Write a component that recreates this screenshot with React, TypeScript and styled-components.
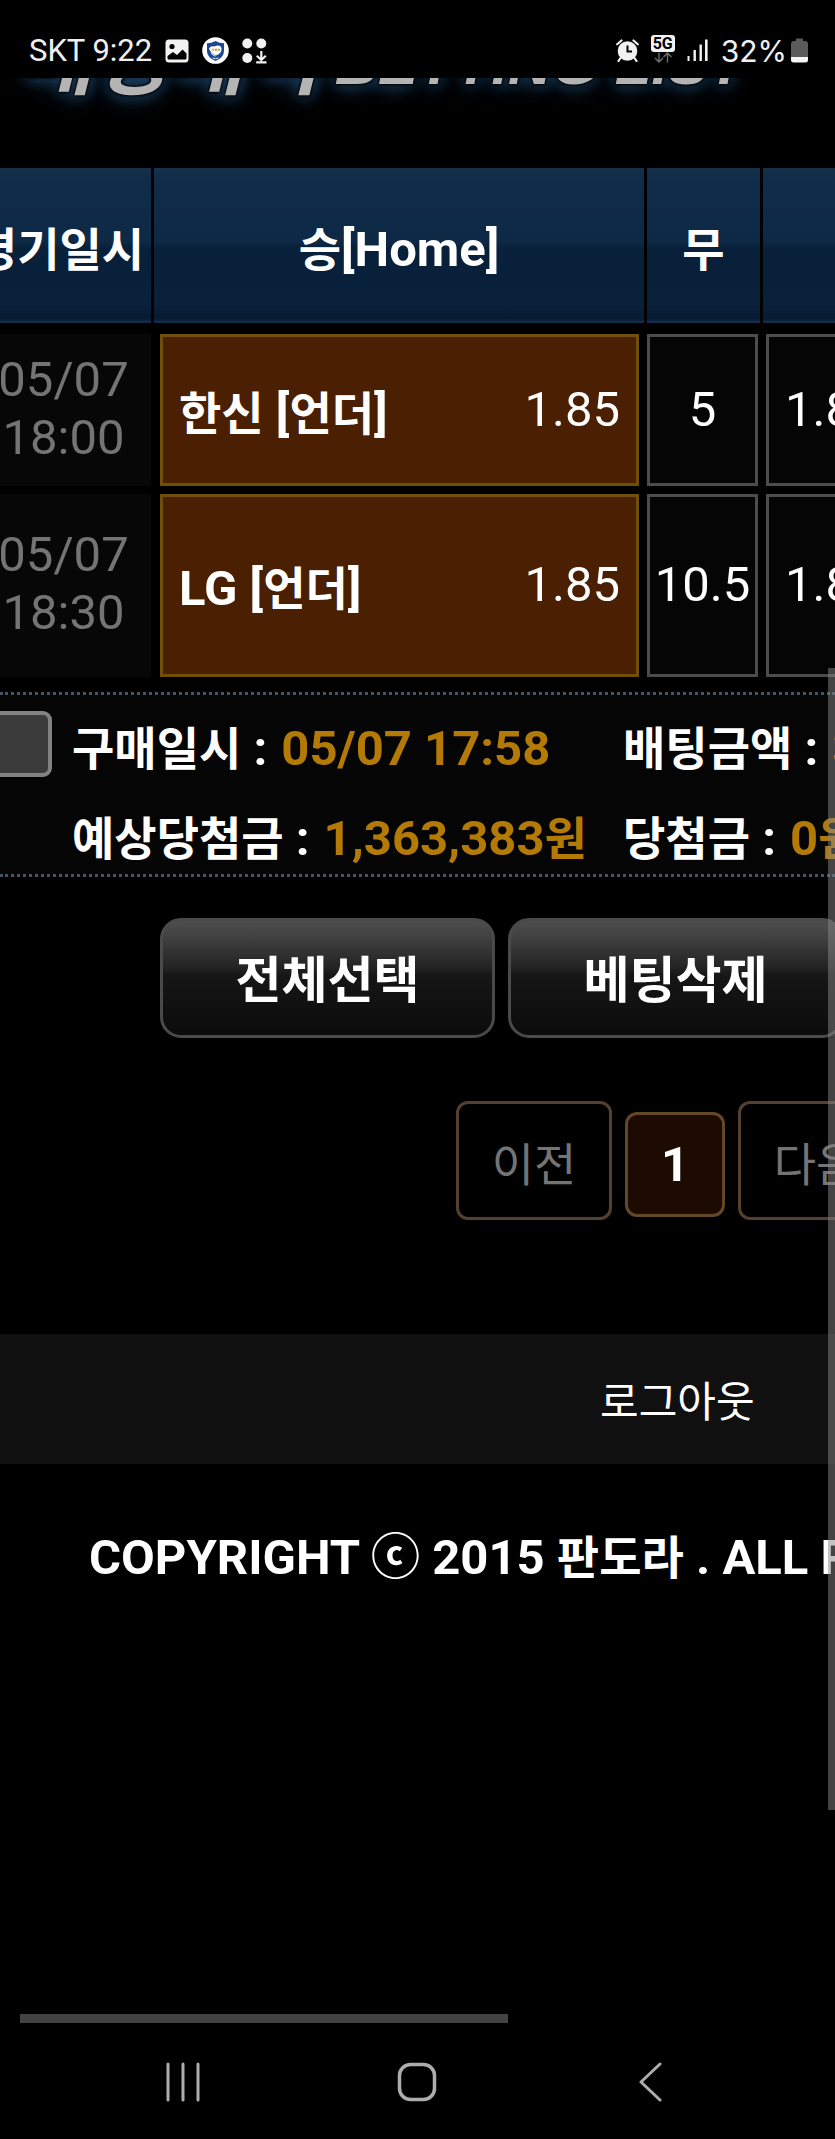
import React from "react";
import styled, { createGlobalStyle, css } from "styled-components";

const GlobalStyle = createGlobalStyle`
  * { box-sizing: border-box; }
  html, body { margin: 0; background: #000; }
  body {
    color: #fff;
    font-family: Roboto, "Noto Sans CJK KR", sans-serif;
    font-size: 49px;
    line-height: 58px;
    overflow-x: hidden;
  }
  a { color: inherit; text-decoration: none; }
`;

const Screen = styled.div`
  min-height: 100vh;
  display: flex;
  flex-direction: column;
  background: #000;
`;

const StatusBar = styled.header`
  height: 78px;
  padding: 23px 27px 0 29px;
  display: flex;
  justify-content: space-between;
  align-items: flex-start;
  color: #f0f0f0;
  font-size: 31px;
  line-height: 36px;
`;

const StatusGroup = styled.div<{ $gap: number }>`
  height: 55px;
  display: flex;
  align-items: center;
  gap: ${(p) => p.$gap}px;
  white-space: nowrap;
  svg { display: block; }
`;

const StatusPair = styled.span`
  display: flex;
  align-items: center;
  gap: 4px;
`;

const Percent = styled.span`
  font-family: Inter, sans-serif;
  font-size: 30px;
`;

const Content = styled.main`
  position: relative;
  flex: 1;
  overflow: hidden;
  padding-bottom: 120px;
`;

const Banner = styled.div`
  height: 90px;
  overflow: hidden;
`;

const Title = styled.h1`
  margin: -62px 0 0;
  padding-left: 18px;
  display: flex;
  align-items: flex-end;
  gap: 15px;
  white-space: nowrap;
  font-style: italic;
  font-weight: 700;
  font-size: 60px;
  line-height: 80px;
  font-family: "Liberation Sans", "Noto Sans CJK KR", sans-serif;
  color: #b4b4b4;
  text-shadow: 0 0 2px #000, 0 0 3px #000, 0 0 5px #000, 0 0 14px #24527f, 0 2px 22px #1d4368;
`;

const TitleKo = styled.span`
  font-size: 82px;
  line-height: 88px;
`;

const BetTable = styled.table`
  width: 1292px;
  margin-left: -36px;
  table-layout: fixed;
  border-collapse: separate;
  border-spacing: 0;
`;

const HeadCell = styled.th`
  height: 155px;
  padding: 9px 0 0;
  border-right: 3px solid #000;
  background: linear-gradient(#15304a 0, #0f2c49 8%, #0d2945 48%, #08203a 52%, #0a203b 88%, #071a33 97%, #16304c 100%);
  font-weight: 700;
  white-space: nowrap;
  &:first-child { padding-left: 4px; }
`;

const Ko = styled.span`
  font-size: 46px;
`;

const DateCell = styled.td<{ $first?: boolean }>`
  padding: ${(p) => (p.$first ? 11 : 8)}px 3px 0 0;
`;

const DateBox = styled.div<{ $tall?: boolean }>`
  height: ${(p) => (p.$tall ? 183 : 152)}px;
  padding: 0 0 3px 12px;
  display: flex;
  flex-direction: column;
  justify-content: center;
  align-items: center;
  background: #070707;
  color: #747474;
`;

const BetCell = styled.td<{ $first?: boolean; $left: number; $right: number }>`
  padding: ${(p) => (p.$first ? 11 : 8)}px ${(p) => p.$right}px 0 ${(p) => p.$left}px;
`;

const BetBox = styled.div<{ $tall?: boolean; $picked?: boolean; $center?: boolean }>`
  height: ${(p) => (p.$tall ? 183 : 152)}px;
  padding: 0 ${(p) => (p.$center ? 0 : 16)}px ${(p) => (p.$tall ? 2 : 0)}px;
  display: flex;
  align-items: center;
  justify-content: ${(p) => (p.$center ? "center" : "space-between")};
  border: 3px solid #4c4c4c;
  background: #050505;
  white-space: nowrap;
  ${(p) =>
    p.$picked &&
    css`
      border-color: #705006;
      background: #4a1f02;
    `}
`;

const Team = styled.strong`
  padding-top: 8px;
  font-weight: 700;
`;

const Summary = styled.section`
  margin-top: 15px;
  height: 185px;
  display: flex;
  border-top: 3px dotted #455465;
  border-bottom: 3px dotted #455465;
  background: #050505;
  font-weight: 700;
  white-space: nowrap;
`;

const Pick = styled.input`
  appearance: none;
  flex: none;
  width: 66px;
  height: 66px;
  margin: 16px 20px 0 -14px;
  border: 4px solid #828282;
  border-radius: 9px;
  background: #3b3b3b;
`;

const Facts = styled.dl`
  margin: 0;
  padding-top: 9px;
  display: grid;
  grid-template-columns: 551px 620px;
  grid-auto-rows: 90px;
`;

const Fact = styled.div`
  display: flex;
  align-items: center;
  gap: 14px;
  height: 90px;
`;

const Term = styled.dt``;

const Value = styled.dd`
  margin: 0;
  color: #b47a06;
`;

const Actions = styled.div`
  margin: 41px 0 0 160px;
  display: flex;
  gap: 13px;
`;

const ActionButton = styled.button`
  flex: none;
  width: 335px;
  height: 120px;
  padding: 0 0 4px;
  border: 3px solid #4a4a4a;
  border-radius: 21px;
  background: linear-gradient(#505050 0, #424242 15%, #222 42%, #161616 48%, #0b0b0b 100%) border-box;
  color: #fff;
  font: 700 50px/58px "Noto Sans CJK KR", sans-serif;
`;

const Pager = styled.nav`
  margin: 63px 0 0 456px;
  display: flex;
  align-items: flex-start;
  gap: 13px;
`;

const PageLink = styled.a<{ $current?: boolean }>`
  flex: none;
  width: 156px;
  height: 119px;
  padding-top: 8px;
  display: flex;
  align-items: center;
  justify-content: center;
  border: 3px solid #54402f;
  border-radius: 12px;
  color: #747474;
  font-size: 46px;
  ${(p) =>
    p.$current &&
    css`
      width: 100px;
      height: 105px;
      padding-top: 0;
      margin-top: 11px;
      border-color: #634827;
      background: #1d0b01;
      color: #fff;
      font-size: 49px;
      font-weight: 700;
    `}
`;

const LogoutBar = styled.div`
  margin-top: 114px;
  height: 130px;
  padding: 8px 0 0 600px;
  display: flex;
  align-items: center;
  background: #101010;
  font-size: 42px;
  white-space: nowrap;
`;

const Copyright = styled.footer`
  margin-top: 65px;
  padding-left: 89px;
  font-weight: 700;
  white-space: nowrap;
`;

const ScrollThumb = styled.div<{ $axis: "x" | "y" }>`
  position: absolute;
  background: rgba(134, 134, 134, 0.5);
  ${(p) =>
    p.$axis === "y"
      ? css`
          top: 30.3%;
          right: 0;
          width: 7px;
          height: 58.6%;
        `
      : css`
          left: 20px;
          bottom: 3px;
          width: 58.4%;
          height: 9px;
        `}
`;

const SystemNav = styled.nav`
  height: 113px;
  padding: 0 2px 2px 0;
  display: flex;
  justify-content: center;
  align-items: center;
  gap: 163px;
`;

const NavKey = styled.button`
  width: 70px;
  height: 70px;
  padding: 0;
  border: 0;
  background: none;
  svg { display: block; margin: 0 auto; }
`;

const PictureIcon = () => (
  <svg width="24" height="24" viewBox="0 0 24 24">
    <rect x="0.5" y="0.5" width="23" height="23" rx="3.500" fill="#f2f2f2" />
    <circle cx="7" cy="7.500" r="2.600" fill="#000" />
    <path d="M2.500 19 V17 L8 13 L12 16 L17.500 10.500 L21.500 14.500 V19 Q21.500 20.500 20 20.500 H4 Q2.500 20.500 2.500 19 Z" fill="#000" />
  </svg>
);

const ShieldIcon = () => (
  <svg width="27" height="27" viewBox="0 0 27 27">
    <circle cx="13.500" cy="13.500" r="13.300" fill="#fff" />
    <path d="M13.500 4 Q17.500 6.200 22 6.200 V14 Q22 20.500 13.500 24 Q5 20.500 5 14 V6.200 Q9.500 6.200 13.500 4 Z" fill="#1c4796" />
    <path d="M7 11.500 Q9 8.500 12 9.500 Q18 7 19.500 11 Q20 16.500 14 18.500 Q9 17 7 11.500 Z" fill="#fff" />
    <circle cx="11" cy="12.700" r="1.300" fill="#e8b25a" />
    <circle cx="14" cy="12.700" r="1.300" fill="#e89a3c" />
    <circle cx="17" cy="12.700" r="1.200" fill="#8fbf8a" />
    <path d="M9 16 Q10.500 18.500 13.500 19.200 M10.500 21 Q13.500 22.500 16.500 21" stroke="#dfe6f5" fill="none" />
  </svg>
);

const AppsIcon = () => (
  <svg width="25" height="26" viewBox="0 0 25 26" fill="#f2f2f2">
    <circle cx="5.300" cy="5.500" r="5" />
    <circle cx="19.300" cy="5.500" r="5" />
    <circle cx="5.300" cy="20" r="5" />
    <path d="M19.300 13 V22 M14.800 17.800 L19.300 22 L23.800 17.800 M14.200 24.300 H24.500" stroke="#f2f2f2" strokeWidth="2.200" fill="none" />
  </svg>
);

const AlarmIcon = () => (
  <svg width="23" height="23" viewBox="0 0 23 23">
    <circle cx="11.500" cy="12" r="9.800" fill="#f2f2f2" />
    <path d="M1.200 5.300 L5.500 1.500 M21.800 5.300 L17.500 1.500 M4.500 19 L2.500 22 M18.500 19 L20.500 22" stroke="#f2f2f2" strokeWidth="2.200" strokeLinecap="round" />
    <path d="M11.500 6.500 V12.500 H16" stroke="#000" strokeWidth="2" fill="none" />
  </svg>
);

const NetworkBadge = styled.span`
  width: 24px;
  height: 28px;
  margin-bottom: 3px;
  display: flex;
  flex-direction: column;
`;

const NetworkLabel = styled.span`
  height: 17px;
  border-radius: 3px;
  background: #f2f2f2;
  color: #000;
  font-size: 16px;
  font-weight: 700;
  line-height: 17px;
  text-align: center;
`;

const DataArrows = () => (
  <svg width="24" height="11" viewBox="0 0 24 11" fill="none" stroke="#6e6e6e" strokeWidth="1.400">
    <path d="M8 0.500 V10 M4 6 L8 10 L12 6 M16.500 10.500 V1 M12.500 5 L16.500 1 L20.500 5" />
  </svg>
);

const SignalIcon = () => (
  <svg width="22" height="23" viewBox="0 0 22 23" fill="#f2f2f2">
    <rect x="0.500" y="17" width="2" height="5" />
    <rect x="6.500" y="11" width="2.400" height="11" />
    <rect x="12.500" y="5.500" width="2.400" height="16.500" />
    <rect x="18" y="0.500" width="2.600" height="21.500" />
  </svg>
);

const BatteryIcon = () => (
  <svg width="17" height="25" viewBox="0 0 17 25">
    <path d="M5 0.500 H12 V3 H14 Q17 3 17 6 V19 H0 V6 Q0 3 3 3 H5 Z" fill="#5b5b5b" />
    <path d="M0 19 H17 V22 Q17 24.500 14 24.500 H3 Q0 24.500 0 22 Z" fill="#f5f5f5" />
  </svg>
);

interface Bet {
  day: string;
  time: string;
  team: React.ReactNode;
  home: string;
  draw: string;
  away: string;
}

const pickLabel = (
  <>
    [<Ko>언더</Ko>]
  </>
);

const bets: Bet[] = [
  { day: "05/07", time: "18:00", team: <><Ko>한신</Ko> {pickLabel}</>, home: "1.85", draw: "5", away: "1.85" },
  { day: "05/07", time: "18:30", team: <>LG {pickLabel}</>, home: "1.85", draw: "10.5", away: "1.85" },
];

const facts: [string, React.ReactNode][] = [
  ["구매일시", "05/07 17:58"],
  ["배팅금액", "3"],
  ["예상당첨금", <>1,363,383<Ko>원</Ko></>],
  ["당첨금", <>0<Ko>원</Ko></>],
];

export default function App() {
  return (
    <>
      <GlobalStyle />
      <Screen>
        <StatusBar>
          <StatusGroup $gap={13}>
            <span>SKT 9:22</span>
            <PictureIcon />
            <ShieldIcon />
            <AppsIcon />
          </StatusGroup>
          <StatusGroup $gap={12}>
            <AlarmIcon />
            <NetworkBadge>
              <NetworkLabel>5G</NetworkLabel>
              <DataArrows />
            </NetworkBadge>
            <SignalIcon />
            <StatusPair>
              <Percent>32%</Percent>
              <BatteryIcon />
            </StatusPair>
          </StatusGroup>
        </StatusBar>
        <Content>
          <Banner>
            <Title>
              <TitleKo>배팅내역</TitleKo>
              <span>BETTING LIST</span>
            </Title>
          </Banner>
          <BetTable>
            <colgroup>
              <col style={{ width: 190 }} />
              <col style={{ width: 493 }} />
              <col style={{ width: 116 }} />
              <col style={{ width: 493 }} />
            </colgroup>
            <thead>
              <tr>
                <HeadCell><Ko>경기일시</Ko></HeadCell>
                <HeadCell><Ko>승</Ko>[Home]</HeadCell>
                <HeadCell><Ko>무</Ko></HeadCell>
                <HeadCell />
              </tr>
            </thead>
            <tbody>
              {bets.map((bet, i) => {
                const first = i === 0;
                return (
                  <tr key={bet.time}>
                    <DateCell $first={first}>
                      <DateBox $tall={!first}>
                        <span>{bet.day}</span>
                        <span>{bet.time}</span>
                      </DateBox>
                    </DateCell>
                    <BetCell $first={first} $left={6} $right={8}>
                      <BetBox $tall={!first} $picked>
                        <Team>{bet.team}</Team>
                        <span>{bet.home}</span>
                      </BetBox>
                    </BetCell>
                    <BetCell $first={first} $left={0} $right={5}>
                      <BetBox $tall={!first} $center>{bet.draw}</BetBox>
                    </BetCell>
                    <BetCell $first={first} $left={3} $right={8}>
                      <BetBox $tall={!first}>{bet.away}</BetBox>
                    </BetCell>
                  </tr>
                );
              })}
            </tbody>
          </BetTable>
          <Summary>
            <Pick type="checkbox" aria-label="배팅 선택" />
            <Facts>
              {facts.map(([term, value]) => (
                <Fact key={term}>
                  <Term><Ko>{term}</Ko> :</Term>
                  <Value>{value}</Value>
                </Fact>
              ))}
            </Facts>
          </Summary>
          <Actions>
            <ActionButton type="button">전체선택</ActionButton>
            <ActionButton type="button">베팅삭제</ActionButton>
          </Actions>
          <Pager>
            <PageLink href="#prev">이전</PageLink>
            <PageLink href="#1" $current aria-current="page">1</PageLink>
            <PageLink href="#next">다음</PageLink>
          </Pager>
          <LogoutBar>
            <a href="#logout">로그아웃</a>
          </LogoutBar>
          <Copyright>
            COPYRIGHT ⓒ 2015 <Ko>판도라</Ko> . ALL RIGHTS RESERVED
          </Copyright>
          <ScrollThumb $axis="y" />
          <ScrollThumb $axis="x" />
        </Content>
        <SystemNav>
          <NavKey type="button" aria-label="최근 앱">
            <svg width="36" height="40" viewBox="0 0 36 40" stroke="#adadad" strokeWidth="3" strokeLinecap="round">
              <path d="M2 2 V38 M17 2 V38 M32 2 V38" />
            </svg>
          </NavKey>
          <NavKey type="button" aria-label="홈">
            <svg width="40" height="40" viewBox="0 0 40 40" fill="none" stroke="#adadad" strokeWidth="3.500">
              <rect x="2.500" y="2.500" width="35" height="35" rx="11" />
            </svg>
          </NavKey>
          <NavKey type="button" aria-label="뒤로">
            <svg width="24" height="40" viewBox="0 0 24 40" fill="none" stroke="#adadad" strokeWidth="3" strokeLinecap="round" strokeLinejoin="round">
              <path d="M22 2 L3 20 L22 38" />
            </svg>
          </NavKey>
        </SystemNav>
      </Screen>
    </>
  );
}
